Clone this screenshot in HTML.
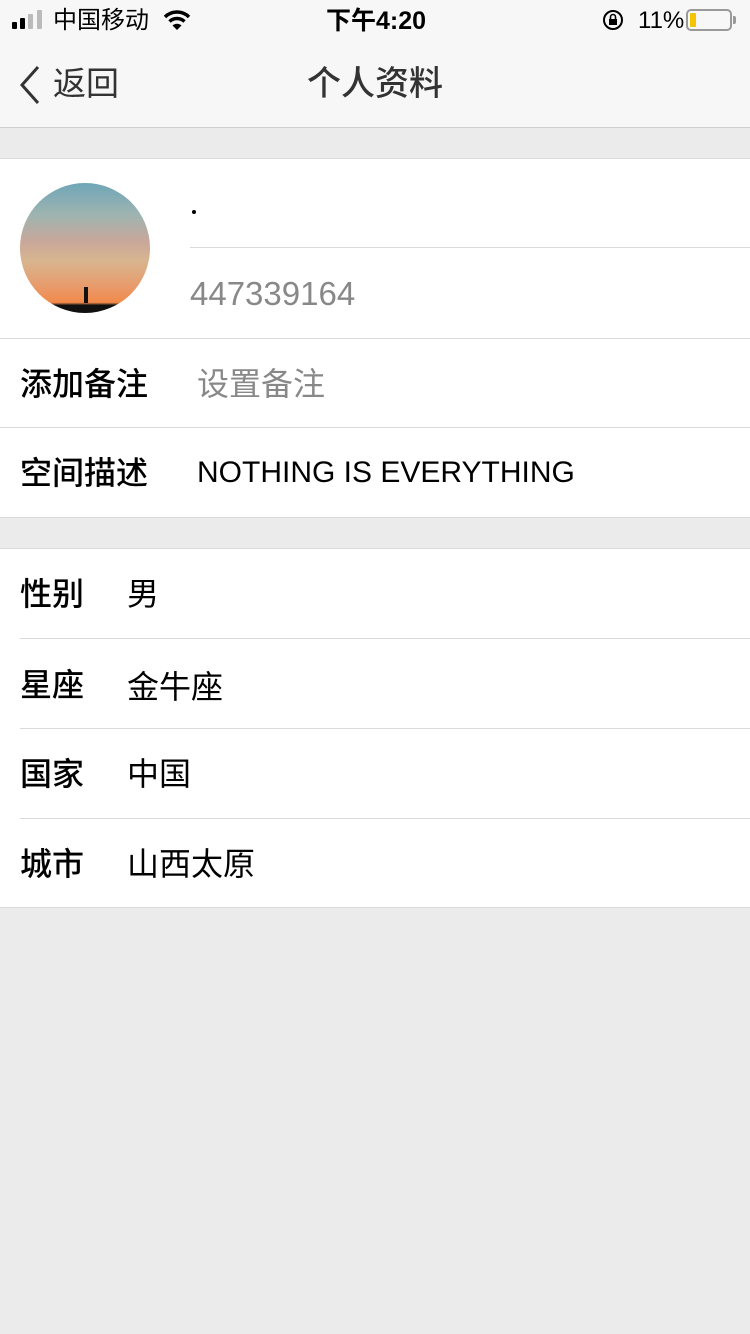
<!DOCTYPE html>
<html><head><meta charset="utf-8"><style>
*{margin:0;padding:0;box-sizing:border-box}
body{width:750px;height:1334px;background:#ebebeb;font-family:"Liberation Sans","Noto Sans CJK SC",sans-serif;position:relative;overflow:hidden;color:#000}
.a{position:absolute}
.line{position:absolute;height:1px;background:#d9d9d9}
.lab{position:absolute;font-size:32px;font-weight:500;line-height:40px}
.val{position:absolute;font-size:32px;line-height:40px}
</style></head><body>
<div class="a" style="left:0;top:0;width:750px;height:127px;background:#f7f7f7"></div>
<div class="line" style="top:127px;left:0;width:750px;background:#cfcfcf"></div>
<!-- status -->
<div class="a" style="left:12px;top:22px;width:5px;height:7px;background:#000;border-radius:1px"></div>
<div class="a" style="left:20px;top:18px;width:5px;height:11px;background:#000;border-radius:1px"></div>
<div class="a" style="left:28px;top:14px;width:5px;height:15px;background:#bbb;border-radius:1px"></div>
<div class="a" style="left:37px;top:10px;width:5px;height:19px;background:#bbb;border-radius:1px"></div>
<div class="a" style="left:53px;top:6px;font-size:24px;line-height:30px">中国移动</div>
<svg class="a" style="left:163px;top:9px" width="28" height="22" viewBox="0 0 28 22"><path d="M2 8 A17 17 0 0 1 26 8" stroke="#000" stroke-width="3.5" fill="none"/><path d="M6.5 12.5 A11 11 0 0 1 21.5 12.5" stroke="#000" stroke-width="3.5" fill="none"/><path d="M14 21 L9.5 16.5 A6.5 6.5 0 0 1 18.5 16.5Z" fill="#000"/></svg>
<div class="a" style="left:326px;top:5px;font-size:25px;line-height:32px;font-weight:bold">下午4:20</div>
<svg class="a" style="left:602px;top:9px" width="24" height="22" viewBox="0 0 24 22"><circle cx="11" cy="11" r="9" stroke="#000" stroke-width="2" fill="none"/><rect x="7" y="10" width="8" height="6" fill="#000"/><path d="M8.5 10V8a2.5 2.5 0 0 1 5 0v2" stroke="#000" stroke-width="1.6" fill="none"/></svg>
<div class="a" style="left:638px;top:6px;font-size:24px;line-height:30px">11%</div>
<div class="a" style="left:686px;top:9px;width:46px;height:22px;border:2px solid #999;border-radius:5px"></div>
<div class="a" style="left:690px;top:13px;width:6px;height:14px;background:#f5c400;border-radius:1px"></div>
<div class="a" style="left:733px;top:16px;width:3px;height:8px;background:#999;border-radius:0 2px 2px 0"></div>
<!-- nav -->
<svg class="a" style="left:16px;top:64px" width="28" height="42" viewBox="0 0 28 42"><path d="M22 3 L6 21 L22 39" stroke="#333" stroke-width="3" fill="none"/></svg>
<div class="a" style="left:53px;top:63px;font-size:33px;line-height:42px;color:#333">返回</div>
<div class="a" style="left:0;width:750px;text-align:center;top:63px;font-size:34px;line-height:42px;color:#333;font-weight:500">个人资料</div>
<!-- header card -->
<div class="line" style="top:158px;left:0;width:750px"></div>
<div class="a" style="left:0;top:159px;width:750px;height:179px;background:#fff"></div>
<div class="a" style="left:20px;top:183px;width:130px;height:130px;border-radius:50%;overflow:hidden;background:linear-gradient(180deg,#6fa6b8 0%,#9fb4b0 25%,#c9a79a 45%,#d8b58f 60%,#e99a6a 80%,#f28a4a 92%,#111 94%)"></div>
<div class="a" style="left:84px;top:287px;width:4px;height:16px;background:#111"></div>
<div class="a" style="left:192px;top:210px;width:4px;height:4px;border-radius:50%;background:#000"></div>
<div class="line" style="top:247px;left:190px;width:560px"></div>
<div class="val" style="left:190px;top:274px;color:#888;font-size:33px">447339164</div>
<div class="line" style="top:338px;left:0;width:750px"></div>
<div class="a" style="left:0;top:339px;width:750px;height:178px;background:#fff"></div>
<div class="lab" style="left:20px;top:364px">添加备注</div>
<div class="val" style="left:197px;top:364px;color:#888">设置备注</div>
<div class="line" style="top:427px;left:0;width:750px"></div>
<div class="lab" style="left:20px;top:453px">空间描述</div>
<div class="val" style="left:197px;top:453px;font-size:30px">NOTHING IS EVERYTHING</div>
<div class="line" style="top:517px;left:0;width:750px"></div>
<!-- info -->
<div class="line" style="top:548px;left:0;width:750px"></div>
<div class="a" style="left:0;top:549px;width:750px;height:358px;background:#fff"></div>
<div class="lab" style="left:20px;top:574px">性别</div><div class="val" style="left:127px;top:574px">男</div>
<div class="line" style="top:638px;left:20px;width:730px"></div>
<div class="lab" style="left:20px;top:665px">星座</div><div class="val" style="left:127px;top:667px">金牛座</div>
<div class="line" style="top:728px;left:20px;width:730px"></div>
<div class="lab" style="left:20px;top:754px">国家</div><div class="val" style="left:127px;top:754px">中国</div>
<div class="line" style="top:818px;left:20px;width:730px"></div>
<div class="lab" style="left:20px;top:844px">城市</div><div class="val" style="left:127px;top:844px">山西太原</div>
<div class="line" style="top:907px;left:0;width:750px"></div>
</body></html>
